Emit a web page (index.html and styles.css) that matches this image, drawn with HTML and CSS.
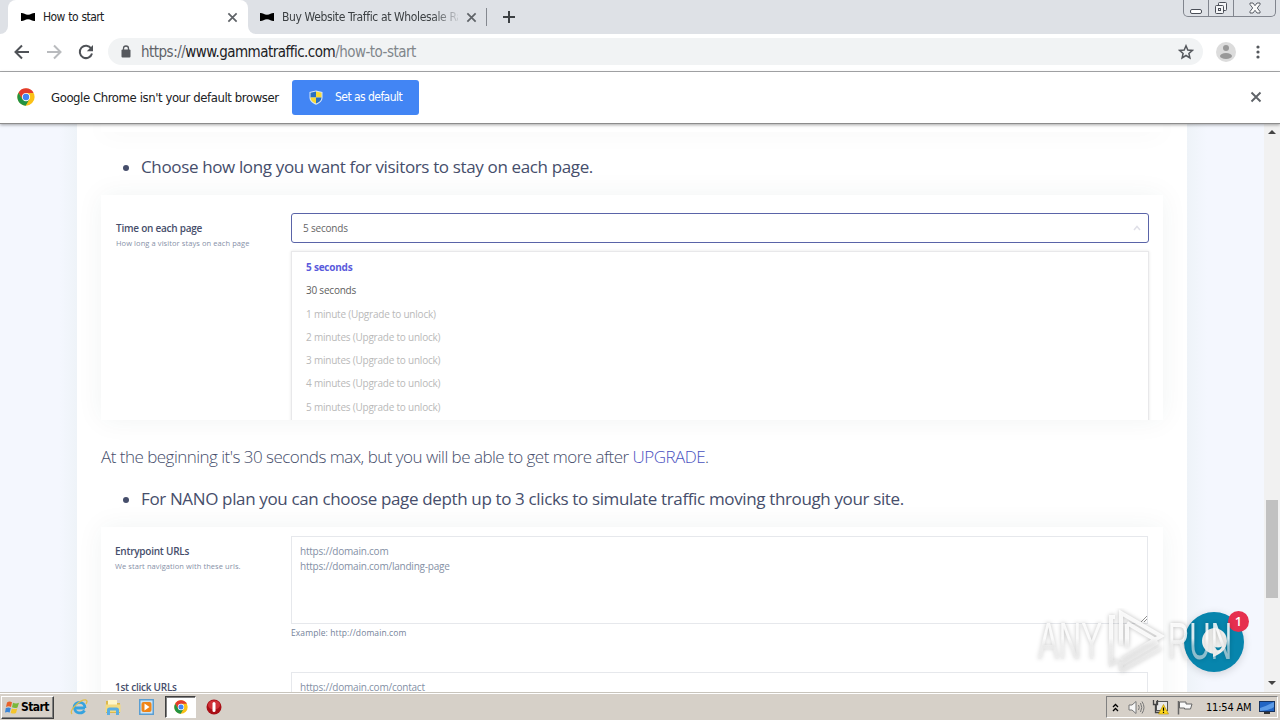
FILE: index.html
```html
<!DOCTYPE html>
<html lang="en">

<head>
    <meta charset="UTF-8">
    <meta name="viewport" content="width=device-width, initial-scale=1.0">
    <title>How to start</title>
    <link rel="stylesheet" href="styles.css">
</head>

<body>
    <!-- Shared icons -->
    <svg class="defs" width="0" height="0">
        <symbol id="bow" viewBox="0 0 16 10">
            <path d="M1 1C3 .5 5 2.500 8 2.700C11 2.500 13 .5 15 1V9C13 9.500 11 7.500 8 7.300C5 7.500 3 9.500 1 9Z" />
        </symbol>
        <symbol id="close" viewBox="0 0 12 12">
            <path d="M1.500 1.500L10.500 10.500M10.500 1.500L1.500 10.500" fill="none" stroke="#5f6368" stroke-width="1.900" />
        </symbol>
        <symbol id="chrome" viewBox="0 0 48 48">
            <circle cx="24" cy="24" r="23" fill="#fbc116" />
            <path d="M24 13H44.200A23 23 0 0 0 4 12.500L14 30Z" fill="#e33b2e" />
            <path d="M4 12.500A23 23 0 0 0 23 47L33 30L24 34L14.500 30Z" fill="#229342" />
            <circle cx="24" cy="24" r="11" fill="#fff" />
            <circle cx="24" cy="24" r="8.600" fill="#4285f4" />
        </symbol>
    </svg>

    <div class="browser">
        <div class="tabs">
            <div class="tab-edge"></div>
            <div class="tab active">
                <svg class="bow" width="16" height="10"><use href="#bow" /></svg>
                <span class="tab-title t1">How to start</span>
                <svg class="tab-close" width="11" height="11"><use href="#close" /></svg>
            </div>
            <div class="tab-corner"></div>
            <div class="tab inactive">
                <svg class="bow" width="16" height="10"><use href="#bow" /></svg>
                <span class="tab-title t2">Buy Website Traffic at Wholesale Rates</span>
                <svg class="tab-close" width="11" height="11"><use href="#close" /></svg>
            </div>
            <div class="new-tab">
                <svg width="14" height="14" viewBox="0 0 14 14"><path d="M7 1V13M1 7H13" stroke="#3c4043" stroke-width="2" /></svg>
            </div>
            <div class="window-buttons">
                <div class="wb min">
                    <svg width="14" height="8" viewBox="0 0 14 8"><rect x="1.500" y="2.500" width="11" height="4" rx="1.500" fill="#fff" stroke="#4b4f58" /></svg>
                </div>
                <div class="wb max">
                    <svg width="14" height="14" viewBox="0 0 14 14" fill="#f4f5f7" stroke="#4b4f58"><rect x="4.500" y="1.500" width="8" height="8" rx="1" /><rect x="1.500" y="4.500" width="8" height="8" rx="1" /><rect x="4.500" y="7.500" width="2" height="2" /></svg>
                </div>
                <div class="wb cls">
                    <svg width="12" height="12" viewBox="0 0 12 12"><path d="M1 1H4L6 3.700L8 1H11V2.500L8.300 6L11 9.500V11H8L6 8.300L4 11H1V9.500L3.700 6L1 2.500Z" fill="#fafafa" stroke="#4b4f58" stroke-width=".9" /></svg>
                </div>
            </div>
        </div>

        <div class="toolbar">
            <svg class="nav" width="16" height="16" viewBox="0 0 16 16"><path d="M15 8H2M8 1.500L1.500 8L8 14.500" fill="none" stroke="#4f5257" stroke-width="2" /></svg>
            <svg class="nav" width="16" height="16" viewBox="0 0 16 16"><path d="M1 8H14M8 1.500L14.500 8L8 14.500" fill="none" stroke="#b9bbbe" stroke-width="2" /></svg>
            <svg class="nav" width="16" height="16" viewBox="0 0 16 16"><path d="M13.200 4.500A6.200 6.200 0 1 0 14 9.500" fill="none" stroke="#4f5257" stroke-width="2" /><path d="M15 1V7.200H8.800Z" fill="#4f5257" /></svg>
            <div class="address">
                <svg class="lock" width="10" height="13" viewBox="0 0 10 13"><rect x=".5" y="4.500" width="9" height="8" rx="1" fill="#55585d" /><path d="M2.500 5V3.500A2.500 2.500 0 0 1 7.500 3.500V5" fill="none" stroke="#55585d" stroke-width="1.300" /></svg>
                <span class="url"><span class="scheme">https://</span><span class="host">www.gammatraffic.com</span><span class="path">/how-to-start</span></span>
                <svg class="star" width="16" height="16" viewBox="0 0 16 16"><path d="M8 1.800L9.800 6L14.300 6.400L10.900 9.400L11.900 13.900L8 11.500L4.100 13.900L5.100 9.400L1.700 6.400L6.200 6Z" fill="none" stroke="#55585d" stroke-width="1.500" /></svg>
            </div>
            <svg class="avatar" width="20" height="20" viewBox="0 0 20 20"><circle cx="10" cy="10" r="10" fill="#dcdcdc" /><circle cx="10" cy="6" r="3" fill="#999" /><ellipse cx="10" cy="14" rx="6" ry="3" fill="#999" /></svg>
            <svg class="dots" width="4" height="14" viewBox="0 0 4 14" fill="#55585d"><circle cx="2" cy="2" r="1.600" /><circle cx="2" cy="7" r="1.600" /><circle cx="2" cy="12" r="1.600" /></svg>
        </div>

        <div class="infobar">
            <svg class="info-logo" width="18" height="18"><use href="#chrome" /></svg>
            <span class="info-text">Google Chrome isn't your default browser</span>
            <div class="set-default">
                <svg width="14" height="15" viewBox="0 0 14 15"><path d="M7 .5L13.500 2V7.500C13.500 11 10.500 13.500 7 14.700C3.500 13.500 .5 11 .5 7.500V2Z" fill="#d7e6f5" /><path d="M7 1.500V7.500H1.500V2.800Z" fill="#2a6fc0" /><path d="M7 1.500L12.500 2.800V7.500H7Z" fill="#f8da35" /><path d="M1.500 7.500H7V13.600C4 12.500 1.500 10.500 1.500 7.500Z" fill="#f8da35" /><path d="M7 7.500H12.500C12.500 10.500 10 12.500 7 13.600Z" fill="#2a6fc0" /></svg>
                <span>Set as default</span>
            </div>
            <svg class="info-close" width="12" height="12"><use href="#close" /></svg>
        </div>

        <div class="viewport">
            <div class="content">
                <div class="shot shot-top"></div>
                <div class="bullet b1"><i class="dot"></i><span class="bullet-text">Choose how long you want for visitors to stay on each page.</span></div>

                <div class="shot shot-time">
                    <div class="label">
                        <div class="name n1">Time on each page</div>
                        <div class="hint h1">How long a visitor stays on each page</div>
                    </div>
                    <div class="field">
                        <div class="select">
                            <span>5 seconds</span>
                            <svg width="8" height="6" viewBox="0 0 8 6"><path d="M1 5L4 1.500L7 5" fill="none" stroke="#e0e0e8" stroke-width="1.500" /></svg>
                        </div>
                        <div class="options">
                            <div class="option selected">5 seconds</div>
                            <div class="option">30 seconds</div>
                            <div class="option locked">1 minute (Upgrade to unlock)</div>
                            <div class="option locked">2 minutes (Upgrade to unlock)</div>
                            <div class="option locked">3 minutes (Upgrade to unlock)</div>
                            <div class="option locked">4 minutes (Upgrade to unlock)</div>
                            <div class="option locked">5 minutes (Upgrade to unlock)</div>
                        </div>
                    </div>
                </div>

                <p class="note">At the beginning it's 30 seconds max, but you will be able to get more after <a>UPGRADE</a>.</p>
                <div class="bullet b2"><i class="dot"></i><span class="bullet-text">For NANO plan you can choose page depth up to 3 clicks to simulate traffic moving through your site.</span></div>

                <div class="shot shot-urls">
                    <div class="row">
                        <div class="label">
                            <div class="name n2">Entrypoint URLs</div>
                            <div class="hint h2">We start navigation with these urls.</div>
                        </div>
                        <div class="field">
                            <div class="textarea">https://domain.com<br>https://domain.com/landing-page
                                <svg class="grip" width="6" height="6" viewBox="0 0 6 6"><path d="M0 6L6 0M3 6L6 3" stroke="#777" stroke-width=".8" /></svg>
                            </div>
                            <div class="example">Example: http://domain.com</div>
                        </div>
                    </div>
                    <div class="row">
                        <div class="label">
                            <div class="name n3">1st click URLs</div>
                        </div>
                        <div class="field">
                            <div class="textarea">https://domain.com/contact</div>
                        </div>
                    </div>
                </div>
            </div>

            <div class="scrollbar">
                <svg width="8" height="4" viewBox="0 0 8 4"><path d="M0 4L4 0L8 4Z" fill="#444" /></svg>
                <div class="thumb"></div>
                <svg width="8" height="4" viewBox="0 0 8 4"><path d="M0 0L4 4L8 0Z" fill="#444" /></svg>
            </div>

            <!-- Chat widget over the page -->
            <div class="chat">
                <svg width="28" height="31" viewBox="0 0 28 31"><path d="M14 1A13 13 0 0 1 27 14C27 22 21 27 13 30V26.800A13 13 0 0 1 14 1Z" fill="#f6f6f4" /><path d="M14 19.500Q18 21.500 22 19.500Q20 24 17 23Z" fill="#0b86ab" /></svg>
                <span class="badge">1</span>
            </div>
        </div>

        <div class="taskbar">
            <div class="start">
                <svg width="15" height="15" viewBox="0 0 15 15"><path d="M2 2.500Q4.500 .8 7 2.300L6 7Q3.500 5.700 1 7Z" fill="#e9622a" /><path d="M8 2.700Q11 4.200 14 2.700L12.500 7.500Q10 8.700 7 7.300Z" fill="#7ab83a" /><path d="M.8 8Q3.500 6.800 5.800 8.100L4.700 12.500Q2.300 11.300 0 12.500Z" fill="#3b86d8" /><path d="M6.800 8.400Q9.500 9.700 12.300 8.500L11 13Q8.500 14.200 5.700 12.900Z" fill="#f5c52b" /></svg>
                <span>Start</span>
            </div>
            <svg class="task-icon" width="18" height="18" viewBox="0 0 18 18"><path d="M15 10H4.500C5 16 12.500 16 14.500 12.500" fill="none" stroke="#35a3df" stroke-width="2.800" /><path d="M4 10C4 2.500 15 2.500 15 10" fill="none" stroke="#35a3df" stroke-width="2.800" /><path d="M2 16C-1.500 12 11 1 16 2C17.500 2.500 17 4.500 16 6" fill="none" stroke="#e0bd4a" stroke-width="1.300" /></svg>
            <svg class="task-icon" width="18" height="18" viewBox="0 0 18 18"><path d="M2 3H8L9 5H16V15H2Z" fill="#dcb84c" /><rect x="4" y="2" width="9" height="5" fill="#fff6c9" /><path d="M1.500 6.500H16.500V14H1.500Z" fill="#f3db80" /><path d="M3 17V12Q3 9.500 5.500 9.500H12.500Q15 9.500 15 12V17H12V12.500H6V17Z" fill="#5aaee2" /></svg>
            <svg class="task-icon" width="18" height="18" viewBox="0 0 18 18"><rect x="1" y="1" width="15" height="16" fill="#5a9ed2" /><rect x="2.500" y="2.500" width="12" height="13" fill="#cbe4f5" /><rect x="3.500" y="4" width="10" height="10" rx="2" fill="#ef8519" /><path d="M6.500 5.500L11.500 9L6.500 12.500Z" fill="#fff" /></svg>
            <div class="task-active">
                <svg width="14" height="14"><use href="#chrome" /></svg>
            </div>
            <svg class="task-icon opera" width="16" height="16" viewBox="0 0 16 16"><circle cx="8" cy="8" r="7.500" fill="#a90f16" /><ellipse cx="8" cy="6" rx="6" ry="4.500" fill="#cf3137" /><rect x="6.500" y="3" width="3" height="10" rx="1.500" fill="#fff" /></svg>

            <div class="tray">
                <svg class="chev" width="7" height="9" viewBox="0 0 7 9"><path d="M1 4L3.500 1.500L6 4M1 8L3.500 5.500L6 8" fill="none" stroke="#000" stroke-width="1.300" /></svg>
                <svg class="sound" width="17" height="15" viewBox="0 0 17 15"><path d="M1 5H4L8 1.500V13.500L4 10H1Z" fill="#f7f7f7" stroke="#777" /><path d="M10.500 5Q12 7.500 10.500 10M12.500 3Q15 7.500 12.500 12M14 1.500Q18 7.500 14 13.500" fill="none" stroke="#777" /></svg>
                <svg class="net" width="17" height="16" viewBox="0 0 17 16"><rect x="4.500" y="2.500" width="11" height="9" fill="#e9e9e9" stroke="#555" /><path d="M1.500 1V5.500H5.500V1M3.500 5.500V13.500H8" fill="none" stroke="#444" stroke-width="1.300" /><path d="M11.500 5.500L16.500 15H6.500Z" fill="#ffd91e" stroke="#b38b00" stroke-width=".6" /><path d="M11.500 8.500V11.800M11.500 12.800V14" stroke="#000" stroke-width="1.200" /></svg>
                <svg class="flag" width="16" height="15" viewBox="0 0 16 15"><path d="M1.500 1V14.500" stroke="#666" stroke-width="1.500" /><path d="M2.500 2H9V4H15L13.500 9H7.500V8H2.500Z" fill="#fafafa" stroke="#666" /></svg>
                <span class="clock">11:54 AM</span>
                <svg class="desk" width="16" height="13" viewBox="0 0 16 13"><rect x=".5" y=".5" width="15" height="10" fill="#2165c4" stroke="#16325e" /><path d="M1 7Q8 5 15 1V6Q9 10 1 10Z" fill="#5c9be6" /><rect x="5" y="11" width="6" height="2" fill="#333" /></svg>
            </div>
        </div>

        <!-- Translucent watermark -->
        <svg class="watermark" width="210" height="76" viewBox="0 0 210 76">
            <defs>
                <linearGradient id="fade" gradientUnits="userSpaceOnUse" x1="0" y1="0" x2="0" y2="76">
                    <stop offset=".4" stop-color="#fff" stop-opacity=".85" />
                    <stop offset=".5" stop-color="#f1f1f1" stop-opacity=".6" />
                    <stop offset="1" stop-color="#e4e4e4" stop-opacity=".55" />
                </linearGradient>
            </defs>
            <g class="mark">
                <text x="8" y="51" textLength="64" lengthAdjust="spacingAndGlyphs">ANY</text>
                <path d="M85 9H81V56L88 52M91 37V5L131 28L91 52M97 16V40M91 63V56L128 34M97 15L124 31M91 63L131 40" />
                <text x="138" y="51" textLength="64" lengthAdjust="spacingAndGlyphs">RUN</text>
            </g>
        </svg>
    </div>
</body>

</html>
```
FILE: styles.css
```css
* {
    box-sizing: border-box;
}

body {
    margin: 0;
    font-family: "DejaVu Sans Condensed", "DejaVu Sans", sans-serif;
    font-stretch: condensed;
    color: #202124;
}

svg {
    display: block;
    flex: none;
}

.defs {
    position: absolute;
}

.browser {
    position: relative;
    display: flex;
    flex-direction: column;
    width: 1280px;
    height: 720px;
    overflow: hidden;
    white-space: nowrap;
}

/* Tabs */
.tabs {
    display: flex;
    height: 34px;
    background: #dee1e6;
}

.tab-edge,
.tab-corner {
    width: 8px;
    background: #fff;
}

.tab-edge::before,
.tab-corner::before {
    content: "";
    display: block;
    height: 34px;
    background: #dee1e6;
    border-bottom-right-radius: 8px;
}

.tab-corner::before {
    border-radius: 0 0 0 8px;
}

.tab {
    display: flex;
    align-items: center;
    height: 34px;
    font-size: 12px;
}

.tab.active {
    width: 240px;
    padding-left: 12px;
    background: #fff;
    border-radius: 8px 8px 0 0;
    box-shadow: 0 -8px 0 #dee1e6;
}

.tab.inactive {
    width: 231px;
    padding-left: 3px;
}

.tab-title {
    margin-left: 7px;
    overflow: hidden;
}

.t1 {
    width: 176px;
    letter-spacing: -0.55px;
    word-spacing: 0.5px;
}

.t2 {
    width: 176px;
    color: #3c4043;
    letter-spacing: -0.37px;
    -webkit-mask-image: linear-gradient(90deg, #000 150px, transparent 180px);
    mask-image: linear-gradient(90deg, #000 150px, transparent 180px);
}

.tab-close {
    margin-left: 8px;
}

.new-tab {
    display: flex;
    align-items: center;
    height: 18px;
    margin-top: 8px;
    margin-left: -1px;
    padding-left: 15px;
    border-left: 1px solid #84888f;
}

.window-buttons {
    display: flex;
    height: 17px;
    margin-left: auto;
    margin-right: 4px;
    border: 1px solid #81858e;
    border-top: none;
    border-radius: 0 0 5px 5px;
}

.wb {
    display: flex;
    align-items: center;
    justify-content: center;
    border-right: 1px solid #81858e;
}

.wb.min {
    width: 25px;
    padding-top: 5px;
}

.wb.max {
    width: 25px;
}

.wb.cls {
    width: 41px;
    border-right: none;
}

/* Toolbar */
.toolbar {
    display: flex;
    align-items: center;
    height: 38px;
    padding: 0 20px 2px 14px;
    background: #fff;
    border-bottom: 1px solid #a9abad;
}

.nav {
    margin-right: 16px;
}

.address {
    display: flex;
    align-items: center;
    width: 1095px;
    height: 27px;
    margin-left: -2px;
    padding: 0 9px 0 13px;
    border-radius: 14px;
    background: #f1f3f4;
}

.url {
    margin-left: 10px;
    font-size: 15px;
    letter-spacing: -0.52px;
}

.scheme {
    color: #5f6368;
}

.host {
    color: #202124;
}

.path {
    color: #80868b;
}

.star {
    margin-left: auto;
}

.avatar {
    margin-left: 13px;
}

.dots {
    margin-left: auto;
}

/* Default browser bar */
.infobar {
    position: relative;
    z-index: 1;
    display: flex;
    align-items: center;
    height: 52px;
    padding: 0 18px 1px 17px;
    background: #fff;
    border-bottom: 1px solid #8c8c8c;
    box-shadow: 0 1px 3px rgba(0, 0, 0, 0.35);
}

.info-text {
    width: 228px;
    margin-left: 16px;
    font-size: 13px;
    letter-spacing: -0.42px;
}

.set-default {
    display: flex;
    align-items: center;
    width: 127px;
    height: 35px;
    margin-left: 13px;
    padding-left: 17px;
    border-radius: 3px;
    background: #4285f4;
    color: #fff;
    font-size: 12px;
    letter-spacing: -0.55px;
}

.set-default span {
    margin-left: 12px;
}

.info-close {
    margin-left: auto;
}

/* Page */
.viewport {
    position: relative;
    display: flex;
    height: 568px;
    padding-left: 77px;
    background: linear-gradient(90deg, #f4f7fe 60px, #eef3f8 77px, #eef3f8 1187px, #f4f7fe 1207px);
    font-family: "Open Sans", sans-serif;
    font-stretch: normal;
    color: #464e6b;
}

.content {
    width: 1110px;
    height: 568px;
    padding: 0 24px;
    overflow: hidden;
    background: #fff;
}

.shot {
    display: flex;
    width: 1062px;
    background: #fff;
    box-shadow: 0 0 26px rgba(40, 60, 60, 0.06);
}

.shot-top {
    height: 8px;
}

.bullet {
    display: flex;
    align-items: center;
    padding-left: 22px;
    font-size: 17px;
    letter-spacing: -0.36px;
}

.b1 {
    height: 63px;
    padding-top: 5px;
}

.b2 {
    height: 49px;
    padding-bottom: 9px;
}

.dot {
    width: 6px;
    height: 6px;
    margin-top: 3px;
    margin-right: 12px;
    border-radius: 50%;
    background: #464e6b;
}

.shot-time {
    height: 225px;
    padding: 18px 14px 0 15px;
    overflow: hidden;
}

.label {
    width: 175px;
}

.name {
    font-size: 10px;
    line-height: 14px;
    font-weight: 600;
    letter-spacing: -0.24px;
}

.hint {
    font-size: 7.5px;
    line-height: 12px;
    letter-spacing: 0.08px;
    color: #8791a8;
}

.shot-time .label {
    padding-top: 8px;
}

.shot-time .hint {
    margin-top: 2px;
}

.field {
    flex: 1;
}

.select {
    display: flex;
    align-items: center;
    justify-content: space-between;
    height: 30px;
    padding: 0 7px 0 11px;
    border: 1px solid #5a64a8;
    border-radius: 3px;
    font-size: 10px;
    letter-spacing: -0.2px;
    color: #666;
}

.options {
    height: 180px;
    margin-top: 8px;
    padding: 4px 14px;
    border: 1px solid #e8e8ea;
    box-shadow: 0 0 3px rgba(0, 0, 0, 0.1);
}

.option {
    height: 23.300px;
    font-size: 10px;
    line-height: 23px;
    letter-spacing: -0.22px;
    color: #606060;
}

.option.selected {
    color: #5b5bdc;
    font-weight: 700;
}

.option.locked {
    color: #b9b9b9;
}

.note {
    height: 58px;
    margin: 0;
    padding-top: 25px;
    font-size: 17px;
    line-height: 24px;
    font-weight: 300;
    letter-spacing: -0.52px;
}

.note a {
    color: #4a52c0;
}

.shot-urls {
    flex-direction: column;
    height: 200px;
    padding: 9px 15px 0 14px;
}

.row {
    display: flex;
    flex: none;
    height: 136px;
}

.row .label {
    width: 176px;
    padding-top: 8px;
}

.row .hint {
    margin-top: 2px;
}

.textarea {
    position: relative;
    height: 88px;
    padding: 7px 8px;
    border: 1px solid #e6e8ec;
    font-size: 10px;
    line-height: 14.500px;
    letter-spacing: -0.22px;
    color: #8490a5;
}

.grip {
    position: absolute;
    right: 0;
    bottom: 1px;
}

.example {
    margin-top: 2px;
    font-size: 8.500px;
    line-height: 14px;
    letter-spacing: 0.1px;
    color: #75839a;
}

.scrollbar {
    display: flex;
    flex-direction: column;
    align-items: center;
    width: 16px;
    margin-left: auto;
    padding: 6px 0 7px;
    background: #f1f1f1;
}

.thumb {
    width: 12px;
    height: 98px;
    margin-top: 366px;
    margin-bottom: auto;
    background: #c1c1c1;
}

/* Chat widget */
.chat {
    position: absolute;
    left: 1184px;
    top: 488px;
    display: flex;
    align-items: center;
    justify-content: center;
    width: 60px;
    height: 60px;
    border-radius: 50%;
    background: #0785ad;
    box-shadow: 0 2px 8px rgba(0, 0, 0, 0.15);
}

.badge {
    position: absolute;
    left: 44px;
    top: -1px;
    width: 21px;
    height: 21px;
    border-radius: 50%;
    background: #e6304f;
    color: #fff;
    font-size: 13px;
    line-height: 20px;
    font-weight: 600;
    text-align: center;
}

/* Taskbar */
.taskbar {
    display: flex;
    align-items: center;
    height: 28px;
    padding: 1px 0 0 1px;
    background: #d6d0c8;
    border-top: 1px solid #c8c4bc;
    box-shadow: inset 0 1px 0 #fff;
}

.start {
    display: flex;
    align-items: center;
    width: 53px;
    height: 23px;
    padding-left: 3px;
    border: 1px solid;
    border-color: #fff #404040 #404040 #fff;
    box-shadow: inset -1px -1px 0 #808080;
    font-size: 12px;
    font-weight: 700;
    letter-spacing: -0.6px;
    color: #000;
}

.start span {
    margin-left: 1px;
}

.task-icon {
    margin-left: 16px;
}

.task-active {
    display: flex;
    align-items: center;
    justify-content: center;
    width: 31px;
    height: 22px;
    margin-left: 9px;
    border: 1px solid;
    border-color: #404040 #fff #fff #404040;
    box-shadow: inset 1px 1px 0 #808080;
    background: #fff;
}

.opera {
    margin-left: 10px;
}

.tray {
    display: flex;
    align-items: center;
    width: 172px;
    height: 22px;
    margin-left: auto;
    margin-right: 2px;
    padding-left: 5px;
    border: 1px solid;
    border-color: #808080 #fff #fff #808080;
}

.sound {
    margin-left: 9px;
}

.net {
    margin-left: 7px;
}

.flag {
    margin-left: 8px;
}

.clock {
    width: 47px;
    margin-left: 13px;
    font-size: 11px;
    letter-spacing: -0.2px;
    color: #000;
}

.desk {
    margin-left: 6px;
}

.watermark {
    position: absolute;
    left: 1030px;
    top: 608px;
    z-index: 2;
}

.mark {
    filter: drop-shadow(0 0 2px rgba(0, 0, 0, 0.3));
    fill: url(#fade);
    font-family: "Liberation Sans", sans-serif;
    font-size: 52px;
}

.mark path {
    fill: none;
    stroke: url(#fade);
    stroke-width: 4;
}
```
